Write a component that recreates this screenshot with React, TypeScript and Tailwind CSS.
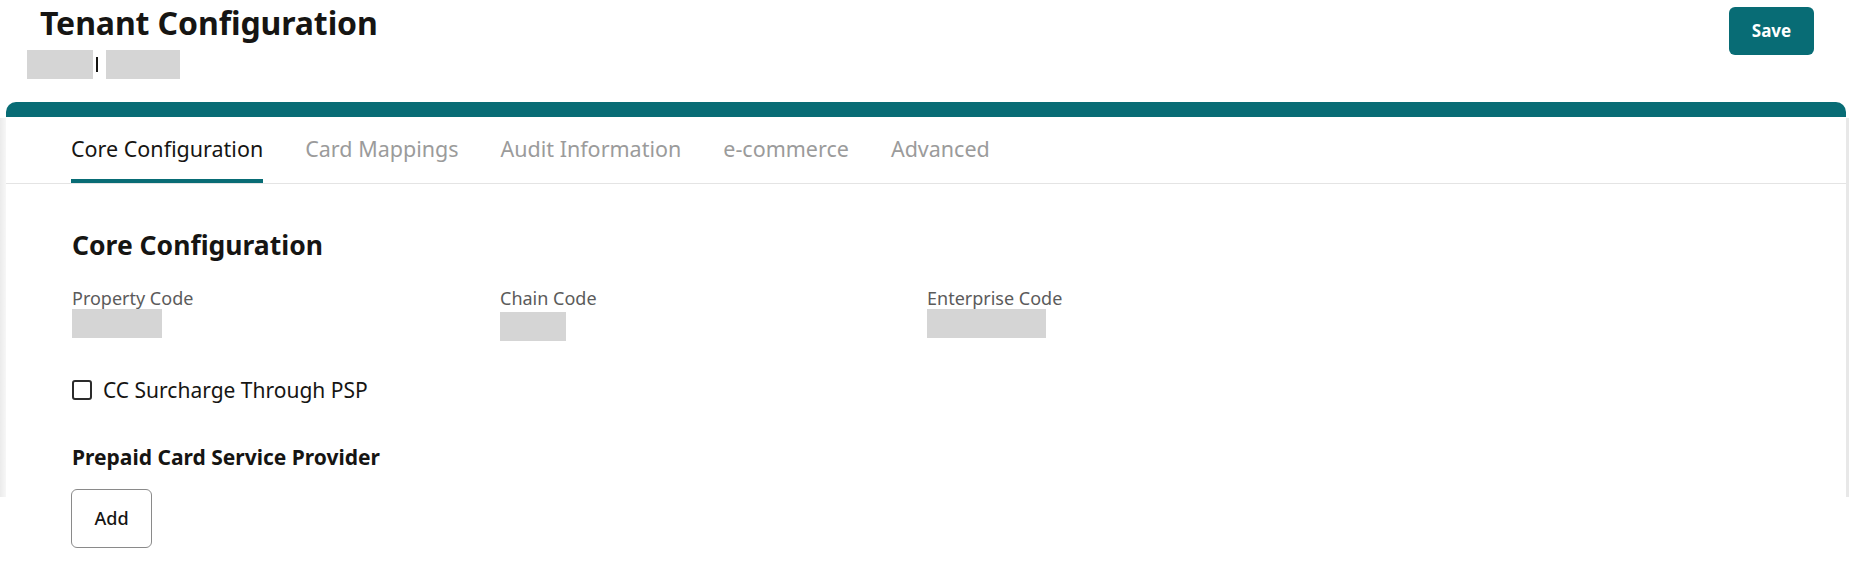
const tabs = ["Core Configuration", "Card Mappings", "Audit Information", "e-commerce", "Advanced"];

const fields = [
  { label: "Property Code", box: "w-[90px]" },
  { label: "Chain Code", box: "w-[66px] mt-[2px]" },
  { label: "Enterprise Code", box: "w-[119px]" },
];

export default function App() {
  return (
    <div className="w-[1852px] h-[565px] overflow-hidden bg-white font-['Noto_Sans',sans-serif] text-[#161513]">
      {/* Page header */}
      <header className="h-[102px] flex justify-between pr-[38px]">
        <div className="pt-[5px]">
          <h1 className="pl-[40px] text-[32px] leading-[36px] font-bold tracking-[-0.1px]">Tenant Configuration</h1>
          <div className="pl-[27px] mt-[9px] flex items-center">
            <div className="w-[66px] h-[29px] bg-[#d5d5d5]" />
            <div className="ml-[3px] w-[2px] h-[15px] bg-[#161513]" />
            <div className="ml-[8px] w-[74px] h-[29px] bg-[#d5d5d5]" />
          </div>
        </div>
        <button className="mt-[7px] w-[85px] h-[48px] rounded-[6px] bg-[#086c75] text-white text-[17px] font-bold">
          Save
        </button>
      </header>

      <div className="flex">
        <div className="w-[6px] h-[395px] pt-[16px]">
          <div className="h-full bg-gradient-to-r from-[#ebebeb] to-[#f7f7f7]" />
        </div>

        <div className="w-[1840px] h-[395px] rounded-t-[10px] border-t-[15px] border-[#086c75] bg-white">
          {/* Tabs */}
          <nav className="flex gap-[42px] pl-[65px] border-b border-[#e4e4e4]">
            {tabs.map((t, i) => (
              <div
                key={t}
                className={
                  i === 0
                    ? "h-[66px] pt-[18px] border-b-4 border-[#086c75] text-[21.5px] leading-[28px] text-[#161513]"
                    : "h-[66px] pt-[18px] border-b-4 border-transparent text-[21.5px] leading-[28px] text-[#9b9b9b]"
                }
              >
                {t}
              </div>
            ))}
          </nav>

          {/* Core configuration panel */}
          <section className="pl-[66px] pt-[45px]">
            <h2 className="text-[26.5px] leading-[32px] font-bold">Core Configuration</h2>

            <div className="mt-[25px] grid grid-cols-[428px_427px_1fr]">
              {fields.map((f) => (
                <div key={f.label}>
                  <div className="text-[18px] leading-[24px] text-[#5b5b5b]">{f.label}</div>
                  <div className={"h-[29px] -mt-[1px] bg-[#d5d5d5] " + f.box} />
                </div>
              ))}
            </div>

            <label className="mt-[35px] flex items-center gap-[11px] text-[21px] leading-[28px]">
              <span className="w-[20px] h-[20px] rounded-[3px] border-2 border-[#2b2b2b]" />
              CC Surcharge Through PSP
            </label>

            <h3 className="mt-[40px] text-[21px] leading-[26px] font-bold">Prepaid Card Service Provider</h3>

            <button className="mt-[19px] -ml-px w-[81px] h-[59px] rounded-[6px] border border-[#8a8a8a] bg-white text-[18px] font-medium">
              Add
            </button>
          </section>
        </div>

        <div className="w-[6px] h-[395px] pt-[16px]">
          <div className="h-full w-[3px] bg-[#e8e8e8]" />
        </div>
      </div>
    </div>
  );
}
